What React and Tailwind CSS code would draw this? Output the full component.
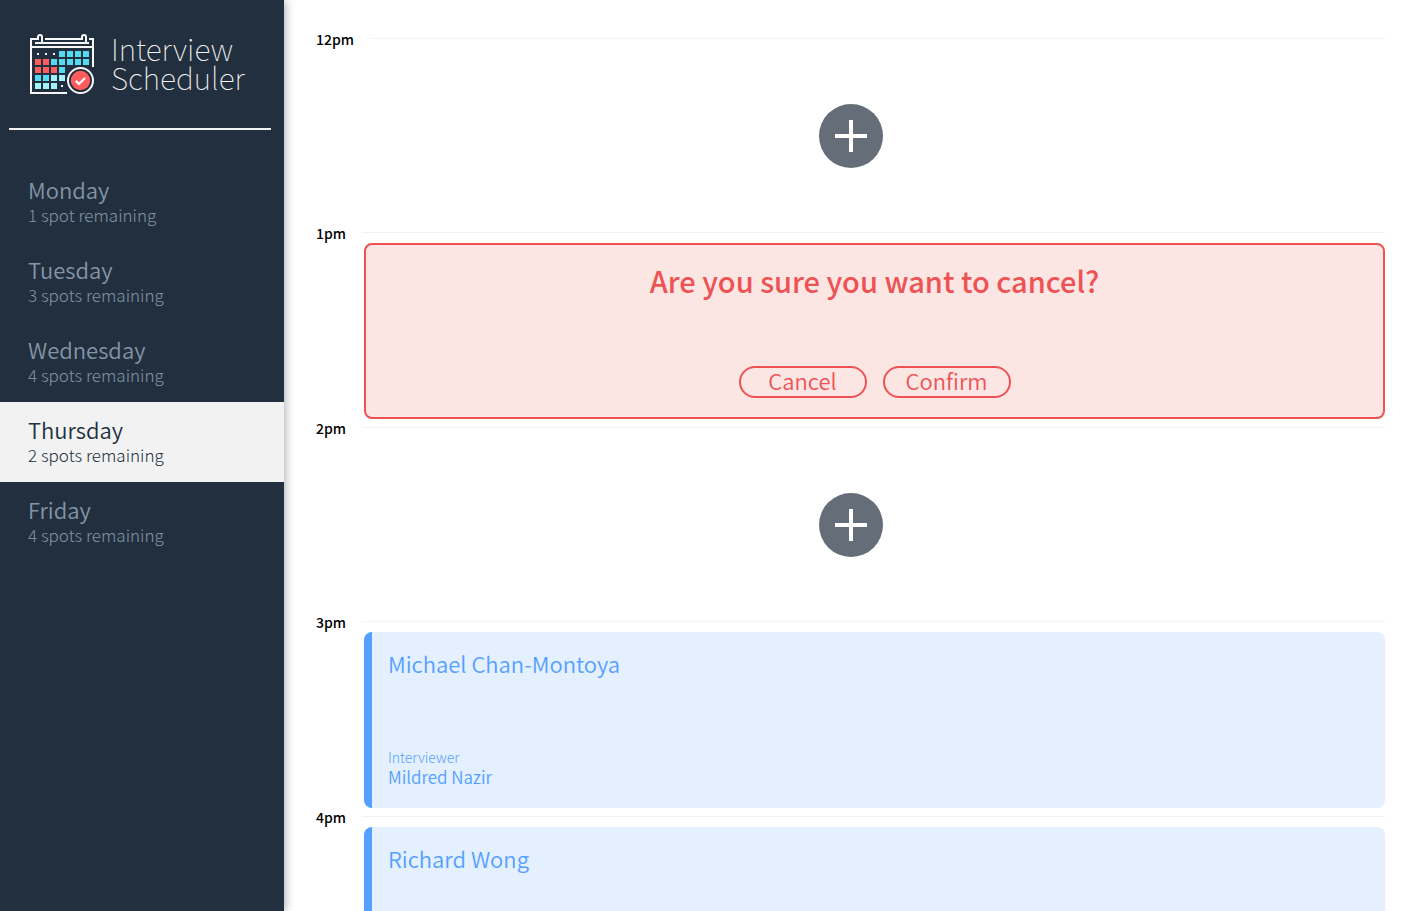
import React, { useState } from "react";

const days = [
  { name: "Monday", spots: 1 },
  { name: "Tuesday", spots: 3 },
  { name: "Wednesday", spots: 4 },
  { name: "Thursday", spots: 2 },
  { name: "Friday", spots: 4 },
];

const appointments = [
  { time: "12pm", kind: "empty" },
  { time: "1pm", kind: "confirm" },
  { time: "2pm", kind: "empty" },
  { time: "3pm", kind: "booked", student: "Michael Chan-Montoya", interviewer: "Mildred Nazir" },
  { time: "4pm", kind: "booked", student: "Richard Wong" },
];

const CYAN = "#54dbf2";
const RED = "#ff5d5d";
const PALE = "#a4f3fb";

const cells = [
  [null, null, null, CYAN, CYAN, CYAN, CYAN],
  [RED, RED, CYAN, CYAN, CYAN, CYAN, CYAN],
  [RED, RED, RED, CYAN],
  [CYAN, CYAN, PALE, PALE],
  [PALE, PALE, PALE, null],
];

function CalendarLogo() {
  return (
    <svg className="shrink-0" width="65" height="61" viewBox="0 0 65 61" fill="none" aria-hidden="true">
      <g stroke="#f7f7f7" strokeWidth="2">
        <path d="M37 59H1V5h7V3a2 2 0 0 1 4 0v5" />
        <path d="M15 5h37V3a2 2 0 0 1 4 0v5" />
        <path d="M59 5h4v28" />
        <path d="M5 9h54M1 13h62" />
      </g>
      {cells.map((row, r) =>
        row.map((fill, c) =>
          fill ? (
            <rect key={`${r}-${c}`} x={5 + c * 8} y={17 + r * 8} width="6" height="6" fill={fill} />
          ) : (
            <rect key={`${r}-${c}`} x={7 + c * 8} y={19 + r * 8} width="2" height="2" fill="#f7f7f7" />
          )
        )
      )}
      <circle cx="50.5" cy="46.5" r="12.5" fill="#222f3e" stroke="#f7f7f7" strokeWidth="2" />
      <circle cx="50.5" cy="46.5" r="9.7" fill={RED} />
      <path d="M45.8 46.8l3.2 3.2 6-6" stroke="#fff" strokeWidth="2.2" />
    </svg>
  );
}

function DayItem({ day, selected, onSelect }) {
  const state = selected ? "bg-[#f2f2f2] text-[#222f3e]" : "text-[#8395a7]";
  return (
    <li>
      <button
        type="button"
        onClick={onSelect}
        aria-pressed={selected}
        className={`block h-20 w-full cursor-pointer pl-7 text-left ${state}`}
      >
        <span className="block text-[22px] leading-[26px] font-[350]">{day.name}</span>
        <span className="block text-[17px] leading-[26px] font-light">
          {day.spots} {day.spots === 1 ? "spot" : "spots"} remaining
        </span>
      </button>
    </li>
  );
}

function EmptySlot({ time }) {
  return (
    <div className="flex h-[175px] justify-center pt-[55px]">
      <button
        type="button"
        aria-label={`Add appointment at ${time}`}
        className="flex size-16 cursor-pointer items-center justify-center rounded-full bg-[#656d78]"
      >
        <svg width="32" height="32" viewBox="0 0 32 32" stroke="#fff" strokeWidth="4" aria-hidden="true">
          <path d="M16 0v32M0 16h32" />
        </svg>
      </button>
    </div>
  );
}

function ActionButton({ children }) {
  return (
    <button
      type="button"
      className="flex h-8 w-32 cursor-pointer items-center justify-center rounded-full border-2 border-[#ee5253] pb-1 text-[22px] leading-6 font-[350]"
    >
      {children}
    </button>
  );
}

function ConfirmCard() {
  return (
    <section className="ml-12 flex h-44 flex-col items-center justify-between rounded-lg border-2 border-[#ee5253] bg-[#fbe6e4] pt-4 pb-[19px] text-[#ee5253]">
      <h1 className="text-[29px] leading-[38px] font-medium">Are you sure you want to cancel?</h1>
      <div className="flex gap-4">
        <ActionButton>Cancel</ActionButton>
        <ActionButton>Confirm</ActionButton>
      </div>
    </section>
  );
}

function BookedCard({ student, interviewer }) {
  return (
    <section className="ml-12 flex h-44 flex-col justify-between rounded-lg border-l-8 border-[#54a0ff] bg-[#e5f0ff] px-4 pt-4 pb-[21px] text-[#54a0ff]">
      <h2 className="text-[22px] leading-[30px] font-[350]">{student}</h2>
      {interviewer && (
        <div>
          <h4 className="text-[14px] leading-5 font-light">Interviewer</h4>
          <h3 className="text-[17px] leading-5 font-[350]">{interviewer}</h3>
        </div>
      )}
    </section>
  );
}

function Appointment({ item }) {
  return (
    <article>
      <header className="flex h-[19px] items-start gap-4">
        <h4 className="text-[14px] leading-[18px] font-medium text-black">{item.time}</h4>
        <hr className="mt-2 flex-1 border-0 border-t border-[#f2f2f2]" />
      </header>
      {item.kind === "empty" && <EmptySlot time={item.time} />}
      {item.kind === "confirm" && <ConfirmCard />}
      {item.kind === "booked" && <BookedCard student={item.student} interviewer={item.interviewer} />}
    </article>
  );
}

export default function App() {
  const [selected, setSelected] = useState("Thursday");
  return (
    <div className="flex h-screen bg-white font-['Noto_Sans_CJK_SC','Noto_Sans',sans-serif]">
      <aside className="relative z-10 w-[284px] shrink-0 bg-[#222f3e] shadow-[2px_0_8px_rgba(34,47,62,0.35)]">
        <div className="flex h-32 items-center gap-4 pl-[30px]">
          <CalendarLogo />
          <p className="pb-0.5 text-[30px] leading-[29px] font-thin text-[#f2f2f2]">
            Interview
            <br />
            Scheduler
          </p>
        </div>
        <hr className="mr-[13px] ml-[9px] border-0 border-t-2 border-[#f2f2f2]" />
        <nav className="pt-8">
          <ul>
            {days.map((day) => (
              <DayItem
                key={day.name}
                day={day}
                selected={day.name === selected}
                onSelect={() => setSelected(day.name)}
              />
            ))}
          </ul>
        </nav>
      </aside>
      <main className="min-w-0 flex-1 overflow-y-auto pt-[30px] pr-7 pl-8 [scrollbar-width:none]">
        {appointments.map((item) => (
          <Appointment key={item.time} item={item} />
        ))}
      </main>
    </div>
  );
}
